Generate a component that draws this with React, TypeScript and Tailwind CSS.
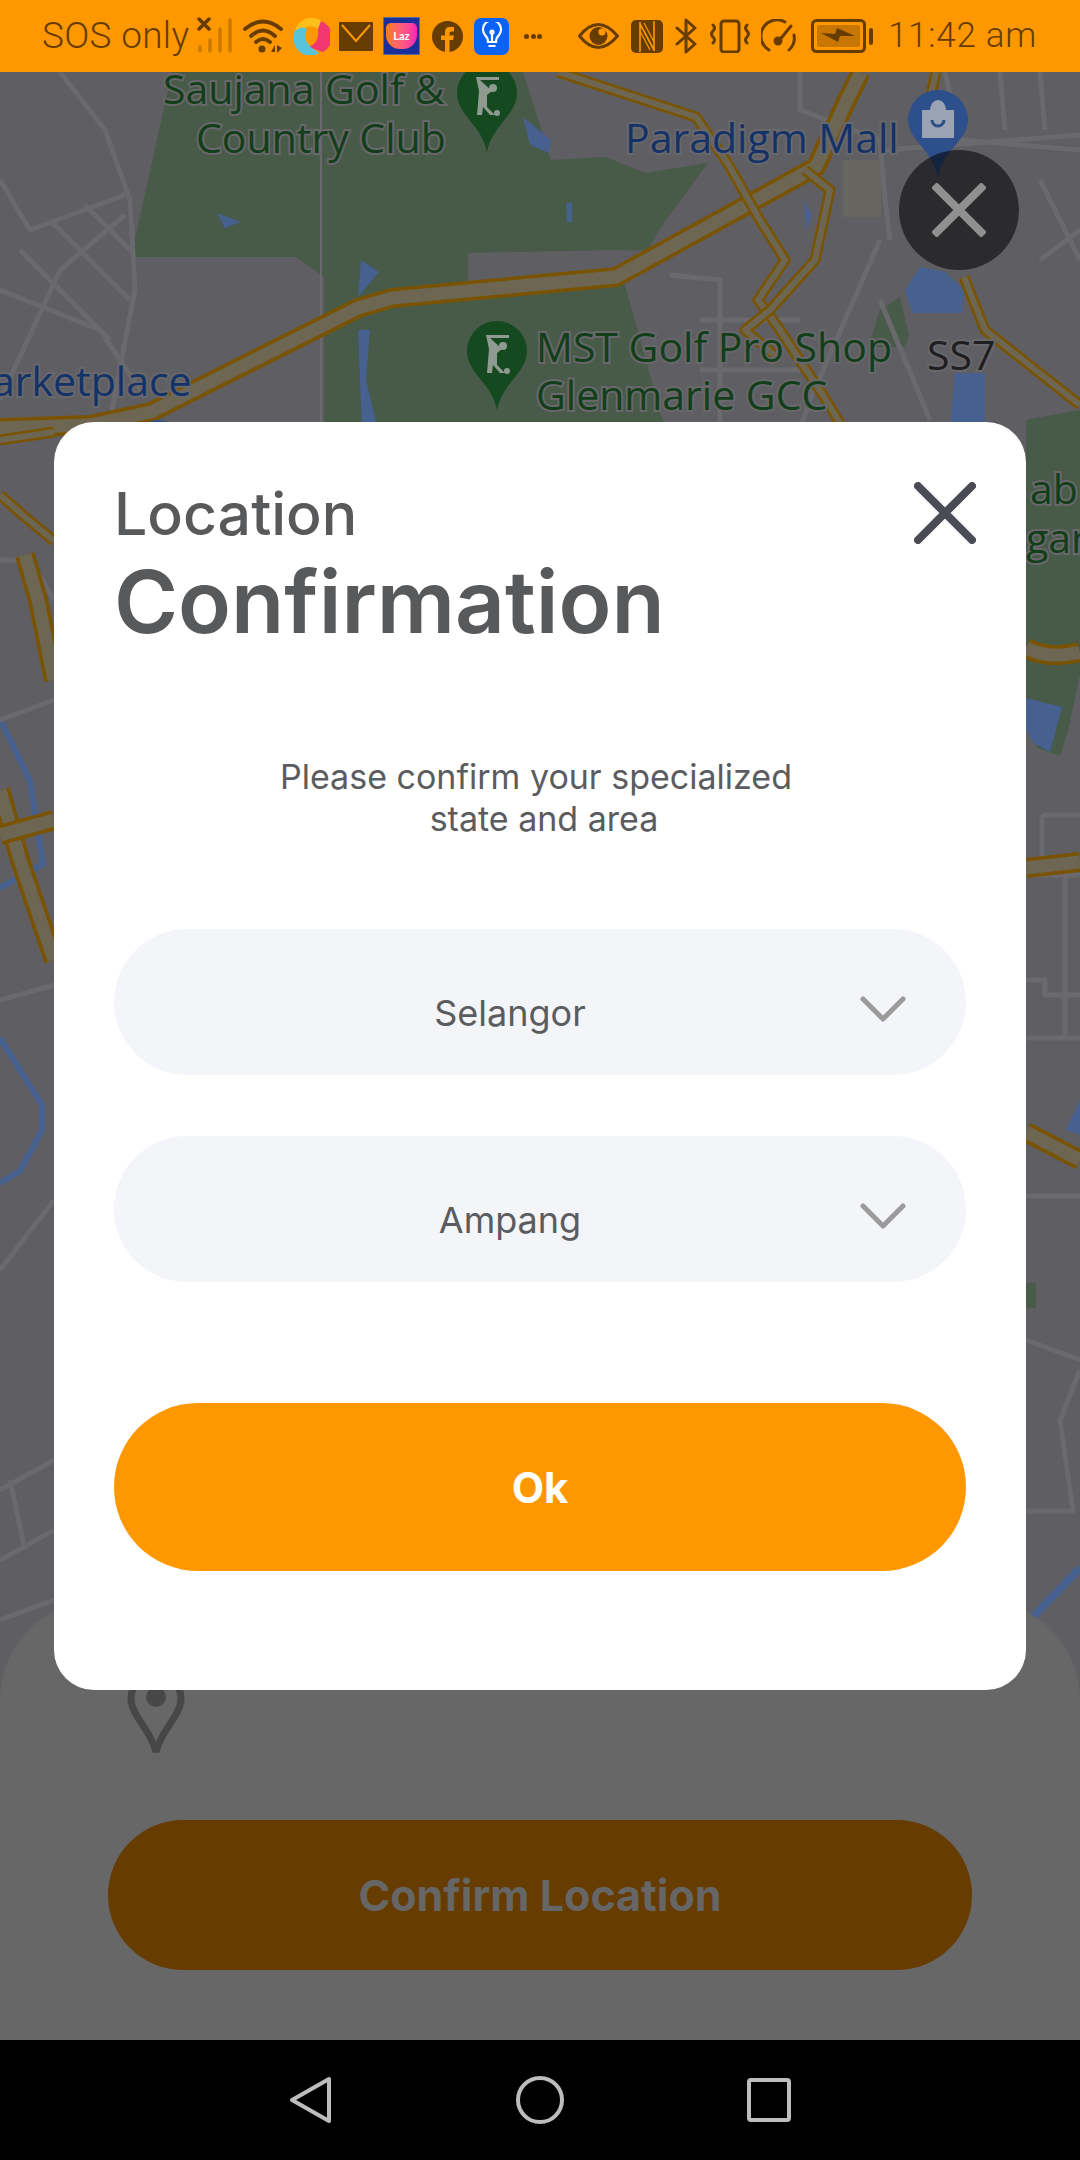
import type { ReactNode } from "react";

const brown = "#663c00";

function Freeway({ d, wide = false }: { d: string; wide?: boolean }) {
  return (
    <g fill="none" strokeLinejoin="round">
      <path d={d} stroke="#7a5300" strokeWidth={wide ? 20 : 11} />
      <path d={d} stroke="#6c6652" strokeWidth={wide ? 13 : 6} />
    </g>
  );
}

const roads = [
  "M60 72 L105 130 L130 200 L135 290 L110 420 L90 470",
  "M0 180 L30 230 L125 195",
  "M0 400 L60 270 L125 215",
  "M0 290 L100 330 L140 390",
  "M20 250 L110 340 M50 220 L130 300 M85 205 L130 250",
  "M800 72 L800 110 L880 140 L885 200 L890 240",
  "M885 150 L1080 135",
  "M945 72 L960 140 L1080 150",
  "M1000 72 L1005 130 M1040 72 L1045 130",
  "M880 240 L810 400 L800 430",
  "M670 275 L720 280 L720 430",
  "M700 320 L800 320 M700 370 L800 370",
  "M880 300 L930 420",
  "M1040 180 L1080 260 M1040 260 L1080 230",
  "M1042 815 H1080 M1042 815 V870 M1026 875 H1080",
  "M1026 1038 H1080 M1026 1196 H1080 M1065 870 V1038 M1026 980 H1045 V995 H1080",
  "M1026 1340 L1080 1360",
  "M1080 1370 L1060 1420 L1073 1511 H1026",
  "M0 1000 L54 985 M0 1270 L54 1200",
  "M0 1490 L54 1460 M0 1560 L54 1530 M10 1480 L25 1550",
  "M0 1620 L54 1600 M0 720 L54 700 M0 560 L30 560 L54 600",
];

function GolfPin({ x, y, fill = "#15491f" }: { x: number; y: number; fill?: string }) {
  return (
    <g transform={`translate(${x} ${y})`}>
      <path d="M0 87 C-5 60 -30 50 -30 28 A30 30 0 0 1 30 28 C30 50 5 60 0 87Z" fill={fill} />
      <path d="M-11 12 H12 V15 H-7 L5 26 L0 30 L0 42 L8 50 H3 L-4 42 L-5 50 H-10 L-8 26Z" fill="#8f9b90" />
      <circle cx={6} cy={23} r={4} fill="#8f9b90" />
      <circle cx={10} cy={48} r={3} fill="#8f9b90" />
    </g>
  );
}

function MapLabel({ x, y, fill, children }: { x: number; y: number; fill: string; children: ReactNode }) {
  return (
    <text
      x={x}
      y={y}
      fill={fill}
      stroke="#68676b"
      strokeWidth={4}
      paintOrder="stroke"
      fontSize={41}
      fontFamily="'Open Sans', sans-serif"
    >
      {children}
    </text>
  );
}

function MapLayer() {
  return (
    <svg className="absolute inset-0 h-full w-full" viewBox="0 72 1080 1968">
      <rect x={0} y={72} width={1080} height={1968} fill="#5f5e62" />
      <path
        d="M172 72 L131 257 L296 257 L324 277 L324 440 L668 440 L620 267 L468 253 L648 250 L661 227 L708 163 L645 173 L606 157 L551 160 L523 72Z"
        fill="#485a48"
      />
      <path d="M468 253 L620 250 L640 275 L468 290Z" fill="#5f5e62" />
      <path d="M1026 420 L1080 410 L1080 674 L1068 731 L1060 756 L1037 748 L1026 715Z" fill="#485a48" />
      <path d="M1026 1283 H1036 V1308 H1026Z" fill="#485a48" />
      <path d="M868 347 L880 310 L900 297 L909 335 L905 347Z" fill="#485a48" />
      <path d="M843 160 L881 160 L881 217 L843 217Z" fill="#676560" />
      <g fill="#466090">
        <path d="M523 117 L551 140 L549 153 L530 145Z" />
        <path d="M217 213 L241 222 L225 228Z" />
        <path d="M361 260 L379 272 L358 297Z" />
        <path d="M358 330 L370 330 L366 380 L378 430 L362 430Z" />
        <path d="M566 203 L572 203 L572 222 L567 222Z" />
        <path d="M905 290 L920 267 L945 272 L964 290 L962 313 L912 313Z" />
        <path d="M955 373 L985 373 L985 430 L950 430Z" />
        <path d="M1026 698 L1062 707 L1050 752 L1035 744 L1026 730Z" />
        <path d="M804 200 L812 215 L806 232Z" />
        <path d="M0 719 L30 781 L43 864 L0 888" fill="none" stroke="#466090" strokeWidth={6} />
        <path d="M0 1038 L42 1105 L42 1130 L20 1171 L0 1183" fill="none" stroke="#466090" strokeWidth={6} />
        <path d="M1032 1618 L1080 1568" fill="none" stroke="#466090" strokeWidth={8} />
        <path d="M1066 1130 L1080 1100 L1080 1135Z" />
      </g>
      <g fill="none" stroke="#6a696d" strokeWidth={5} strokeLinejoin="round">
        {roads.map((d) => (
          <path key={d} d={d} />
        ))}
      </g>
      <path d="M321 72 V440" stroke="#6a696d" strokeWidth={2} />
      <Freeway wide d="M0 428 L90 425 L151 412 L358 308 L392 298 L616 277 L816 167 L847 100 L861 72" />
      <Freeway d="M558 72 L696 117 L730 167 L758 217 L785 260 L758 300 L778 327 L826 400 L850 440" />
      <Freeway d="M805 170 L830 190 L815 260 L770 310 L745 330 L780 360" />
      <Freeway d="M936 72 L925 120" />
      <Freeway d="M964 277 L985 330 L1080 405" />
      <Freeway d="M0 440 L54 432" />
      <Freeway d="M0 495 L25 517 L54 541" />
      <Freeway wide d="M25 555 L38 600 L54 680" />
      <Freeway wide d="M0 790 L20 860 L54 960" />
      <Freeway wide d="M0 835 L54 820" />
      <Freeway wide d="M1026 648 Q1050 660 1080 652" />
      <Freeway wide d="M1026 868 L1080 862" />
      <Freeway wide d="M1026 1132 L1080 1160" />
      <GolfPin x={487} y={65} />
      <GolfPin x={497} y={323} />
      <g transform="translate(938 90)">
        <path d="M0 87 C-5 60 -30 50 -30 30 A30 30 0 0 1 30 30 C30 50 5 60 0 87Z" fill="#2d4f8b" />
        <path d="M-16 20 H16 V48 H-16Z M-8 20 A8 10 0 0 1 8 20" fill="#9aa3b3" />
        <path d="M-6 30 A6 6 0 0 0 6 30" fill="none" stroke="#2d4f8b" strokeWidth={3} />
      </g>
      <MapLabel x={163} y={104} fill="#123f1a">Saujana Golf &amp;</MapLabel>
      <MapLabel x={196} y={153} fill="#123f1a">Country Club</MapLabel>
      <MapLabel x={625} y={153} fill="#133268">Paradigm Mall</MapLabel>
      <MapLabel x={-8} y={396} fill="#133268">arketplace</MapLabel>
      <MapLabel x={536} y={362} fill="#123f1a">MST Golf Pro Shop</MapLabel>
      <MapLabel x={536} y={410} fill="#123f1a">Glenmarie GCC</MapLabel>
      <MapLabel x={927} y={370} fill="#1f1f21">SS7</MapLabel>
      <MapLabel x={1030} y={504} fill="#123f1a">ab G</MapLabel>
      <MapLabel x={1026} y={553} fill="#123f1a">gara</MapLabel>
      <circle cx={158} cy={442} r={22} fill="#2d4f8b" />
    </svg>
  );
}

function StatusBar() {
  return (
    <div className="flex h-[72px] shrink-0 items-center bg-[#ff9800] pl-[42px] font-['Roboto',sans-serif] text-[#663c00]">
      <span className="w-[150px] whitespace-nowrap text-[37px] font-light tracking-[0.3px]">SOS only</span>
      <svg className="ml-[5px] h-[38px] w-[36px]" viewBox="0 0 36 38">
        <path d="M2 2 L12 12 M12 2 L2 12" stroke={brown} strokeWidth={3.5} strokeLinecap="round" />
        <g stroke="#cc7a00" strokeWidth={3.5} strokeLinecap="round">
          <path d="M3 34 V30 M13 34 V23 M23 34 V12 M33 34 V3" />
        </g>
      </svg>
      <svg className="ml-[10px] h-[38px] w-[42px]" viewBox="0 0 42 38">
        <g fill="none" stroke={brown} strokeWidth={3.8} strokeLinecap="round">
          <path d="M2 12 Q20 -3 38 12 M8 19 Q20 8 32 19 M13 25 Q20 19 27 25" />
        </g>
        <circle cx={19} cy={32} r={3.5} fill={brown} />
        <path d="M28 35 L32 28 V35Z M34 28 V36 L39 31Z" fill={brown} />
      </svg>
      <svg className="ml-[8px] h-[38px] w-[37px]" viewBox="0 0 37 38">
        <path d="M2 14 A17 17 0 0 1 27 3 Q33 9 30 16 Q20 5 10 12Z" fill="#ffc01e" />
        <path d="M28 4 A17 17 0 0 1 30 35 L15 30 Q27 27 25 12Z" fill="#f2376f" />
        <path d="M2 14 Q8 8 14 12 Q8 22 19 31 L26 36 A17 17 0 0 1 2 14Z" fill="#58c4dc" />
      </svg>
      <svg className="ml-[9px] h-[29px] w-[34px]" viewBox="0 0 34 29">
        <rect width={34} height={29} fill={brown} />
        <path d="M3 3 L17 19 L31 3" fill="none" stroke="#ff9800" strokeWidth={2} />
      </svg>
      <div className="ml-[10px] flex h-[38px] w-[37px] items-center justify-center border border-[#5b6c90] bg-[#1a2f99]">
        <div className="flex h-[26px] w-[31px] items-center justify-center rounded-b-[14px] rounded-t-[5px] bg-gradient-to-r from-[#ff7a00] to-[#ff1cb4] font-['Lato',sans-serif] text-[11px] font-bold text-white">
          Laz
        </div>
      </div>
      <svg className="ml-[12px] h-[31px] w-[31px]" viewBox="0 0 31 31">
        <circle cx={15.5} cy={15.5} r={15.5} fill={brown} />
        <path d="M13 31 V19 H9 V14.5 H13 V11 Q13 6 18 6 H22 V10.5 H19 Q17.5 10.5 17.5 12 V14.5 H22 L21 19 H17.5 V31Z" fill="#ff9800" />
      </svg>
      <div className="ml-[11px] flex h-[37px] w-[35px] items-center justify-center rounded-[7px] bg-[#0b63f6]">
        <svg className="h-[28px] w-[22px]" viewBox="0 0 22 28" fill="none" stroke="#fff" strokeWidth={2.2}>
          <path d="M7 20 Q7 16 4 13 A9 9 0 1 1 18 13 Q15 16 15 20Z M7.5 24 H14.5 M11 20 V12" />
          <circle cx={11} cy={10} r={1.5} />
        </svg>
      </div>
      <div className="ml-[15px] flex w-[18px] justify-between">
        <span className="h-[5px] w-[5px] rounded-full bg-[#663c00]" />
        <span className="h-[5px] w-[5px] rounded-full bg-[#663c00]" />
        <span className="h-[5px] w-[5px] rounded-full bg-[#663c00]" />
      </div>
      <svg className="ml-[36px] h-[28px] w-[41px]" viewBox="0 0 41 28">
        <path d="M1.5 14 Q20 -9 39.5 14 Q20 37 1.5 14Z" fill="none" stroke={brown} strokeWidth={3} />
        <circle cx={20.5} cy={14} r={9} fill={brown} />
        <circle cx={24} cy={10} r={3.5} fill="#ff9800" />
      </svg>
      <svg className="ml-[12px] h-[33px] w-[32px]" viewBox="0 0 32 33">
        <rect width={32} height={33} rx={5} fill={brown} />
        <path d="M9 32 V2 M23 1 V31 M9 4 L23 30" fill="none" stroke="#ff9800" strokeWidth={1.6} />
        <path d="M13 3 L23 22 M9 11 L19 30" fill="none" stroke="#ff9800" strokeWidth={1.2} />
      </svg>
      <svg className="ml-[12px] h-[36px] w-[22px]" viewBox="0 0 22 36" fill="none" stroke={brown} strokeWidth={3} strokeLinejoin="round" strokeLinecap="round">
        <path d="M2 10 L20 26 L11 34 V2 L20 10 L2 26" />
      </svg>
      <svg className="ml-[13px] h-[34px] w-[40px]" viewBox="0 0 40 34" fill="none" stroke={brown} strokeWidth={3} strokeLinecap="round">
        <rect x={11} y={2} width={18} height={31} rx={3} />
        <path d="M3 6 Q6 9 3 12 Q0 15 3 18 Q6 21 3 24 M37 6 Q34 9 37 12 Q40 15 37 18 Q34 21 37 24" />
      </svg>
      <svg className="ml-[11px] h-[34px] w-[37px]" viewBox="0 0 37 34" fill="none" stroke={brown} strokeWidth={3} strokeLinecap="round">
        <path d="M8 31 A16 16 0 0 1 24 3 M33 16 A16 16 0 0 1 28 31" />
        <path d="M30 7 L17 23" />
        <circle cx={17} cy={22} r={3} fill={brown} />
      </svg>
      <svg className="ml-[13px] h-[34px] w-[62px]" viewBox="0 0 62 34">
        <rect x={1.5} y={1.5} width={52} height={31} rx={4} fill="none" stroke={brown} strokeWidth={3} />
        <rect x={6} y={6} width={43} height={22} rx={2} fill="#c77700" />
        <path d="M10 14 L24 15 L26 9 L44 17 L29 17 L27 23Z" fill={brown} />
        <rect x={58} y={9} width={4} height={17} rx={2} fill={brown} />
      </svg>
      <span className="ml-[15px] whitespace-nowrap text-[35px] font-light tracking-[0.7px]">11:42 am</span>
    </div>
  );
}

function SelectField({ label }: { label: string }) {
  return (
    <div className="relative flex h-[146px] items-center justify-center rounded-full bg-[#f4f5f9] pr-[60px] pt-[22px] text-[36px] text-[#5b5c60]">
      {label}
      <svg className="absolute right-[60px] top-[67px] h-[26px] w-[46px]" viewBox="0 0 46 26" fill="none" stroke="#9b9b9b" strokeWidth={5} strokeLinecap="round" strokeLinejoin="round">
        <path d="M3 3 L23 23 L43 3" />
      </svg>
    </div>
  );
}

function LocationDialog() {
  return (
    <div className="relative h-[1268px] w-[972px] rounded-[40px] bg-white px-[60px] pt-[63px] font-['Inter',sans-serif]">
      <svg className="absolute right-[50px] top-[60px] h-[62px] w-[62px]" viewBox="0 0 62 62" fill="none" stroke="#4a4b55" strokeWidth={8} strokeLinecap="round">
        <path d="M4 4 L58 58 M58 4 L4 58" />
      </svg>
      <h2 className="text-[59px] font-medium leading-[58px] text-[#58595b]">Location</h2>
      <h1 className="mt-[14px] text-[87px] font-semibold leading-[90px] text-[#58595b]">Confirmation</h1>
      <p className="mt-[109px] text-center text-[34px] font-normal leading-[42px] text-[#5b5c60]">
        <span className="block pr-[8px]">Please confirm your specialized</span>
        <span className="block pl-[8px]">state and area</span>
      </p>
      <div className="mt-[89px] flex flex-col gap-[61px]">
        <SelectField label="Selangor" />
        <SelectField label="Ampang" />
      </div>
      <button className="mt-[121px] block h-[168px] w-full rounded-full bg-[#ff9800] text-[42px] font-bold text-white">
        Ok
      </button>
    </div>
  );
}

function BottomSheet() {
  return (
    <div className="absolute inset-x-0 bottom-0 flex h-[440px] flex-col justify-end rounded-t-[100px] bg-[#676767] px-[108px] pb-[70px] font-['Inter',sans-serif]">
      <svg className="ml-[19px] h-[88px] w-[58px]" viewBox="0 0 58 88">
        <path d="M29 82 C24 60 4 45 4 29 A25 25 0 0 1 54 29 C54 45 34 60 29 82Z" fill="none" stroke="#474747" strokeWidth={7} />
        <ellipse cx={29} cy={27} rx={10} ry={10} fill="#474747" />
      </svg>
      <div className="mt-[62px] flex h-[150px] items-center justify-center rounded-full bg-[#663c00] text-[43px] font-bold text-[#666666]">
        Confirm Location
      </div>
    </div>
  );
}

function NavBar() {
  return (
    <div className="flex h-[120px] shrink-0 items-center justify-center gap-[183px] bg-black">
      <svg className="h-[48px] w-[44px]" viewBox="0 0 44 48" fill="none" stroke="#bdbdbd" strokeWidth={4} strokeLinejoin="round">
        <path d="M40 3 V45 L3 24Z" />
      </svg>
      <svg className="h-[48px] w-[48px]" viewBox="0 0 48 48" fill="none" stroke="#bdbdbd" strokeWidth={4}>
        <circle cx={24} cy={24} r={22} />
      </svg>
      <svg className="h-[44px] w-[44px]" viewBox="0 0 44 44" fill="none" stroke="#bdbdbd" strokeWidth={4} strokeLinejoin="round">
        <rect x={2} y={2} width={40} height={40} rx={2} />
      </svg>
    </div>
  );
}

export default function App() {
  return (
    <div className="flex h-[2160px] w-[1080px] flex-col overflow-hidden">
      <StatusBar />
      <main className="relative flex-1 overflow-hidden">
        <MapLayer />
        <BottomSheet />
        <div className="absolute right-[61px] top-[78px] flex h-[120px] w-[120px] items-center justify-center rounded-full bg-black/55">
          <svg className="h-[54px] w-[54px]" viewBox="0 0 54 54" stroke="#909090" strokeWidth={8}>
            <path d="M2 2 L52 52 M52 2 L2 52" />
          </svg>
        </div>
        <div className="absolute inset-0 flex items-center justify-center">
          <LocationDialog />
        </div>
      </main>
      <NavBar />
    </div>
  );
}
